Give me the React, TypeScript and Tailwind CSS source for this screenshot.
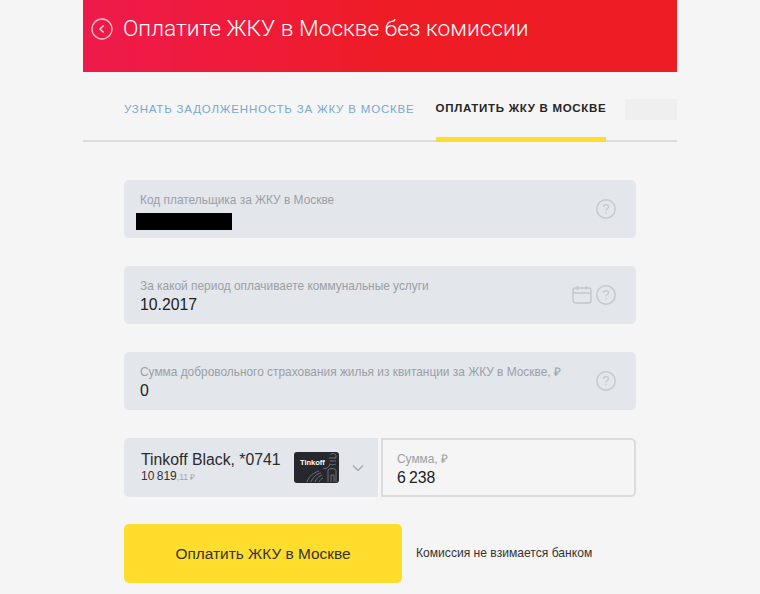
function Help() {
  return (
    <svg width="20" height="20" viewBox="0 0 20 20" fill="none" className="shrink-0">
      <circle cx="10" cy="10" r="9.2" stroke="#c4c8cc" strokeWidth="1.4" />
      <path d="M7.6 8c0-1.5 1.1-2.4 2.5-2.4s2.4.9 2.4 2.1c0 1.9-2.4 1.9-2.4 3.9" stroke="#c4c8cc" strokeWidth="1.3" fill="none" />
      <circle cx="10.1" cy="14" r="0.8" fill="#c4c8cc" />
    </svg>
  );
}

function Calendar() {
  return (
    <svg width="20" height="20" viewBox="0 0 20 20" fill="none" className="shrink-0">
      <rect x="1" y="3" width="18" height="15" rx="2.5" stroke="#c4c8cc" strokeWidth="1.4" />
      <path d="M1 8h18M5.5 1v4M14.5 1v4" stroke="#c4c8cc" strokeWidth="1.4" />
    </svg>
  );
}

function Field({ label, value, calendar }: { label: string; value?: string; calendar?: boolean }) {
  return (
    <div className="flex h-[58px] items-center justify-between rounded-[5px] bg-[#e3e6eb] pl-4 pr-5">
      {value !== undefined ? (
        <div className="flex flex-col pt-[3px]">
          <span className="text-[11.9px] leading-[16px] whitespace-nowrap text-[#9a9fa6]">{label}</span>
          <span className="mt-[1px] text-[15.8px] leading-[20px] text-[#222]">{value}</span>
        </div>
      ) : (
        <div className="flex flex-col pt-[2px]">
          <span className="text-[11.9px] leading-[16px] whitespace-nowrap text-[#9a9fa6]">{label}</span>
          <span className="mt-[5px] -mb-[2px] -ml-1 h-[17px] w-[96px] bg-black" />
        </div>
      )}
      <div className="flex items-center gap-[4px]">
        {calendar && <Calendar />}
        <Help />
      </div>
    </div>
  );
}

function TinkoffCard() {
  return (
    <div className="relative h-[31px] w-[45px] overflow-hidden rounded-[3px] bg-[#26282d]">
      <span className="absolute left-[6px] top-[6px] text-[7.5px] font-bold leading-[9px] text-white">Tinkoff</span>
      <svg width="45" height="31" viewBox="0 0 45 31" fill="none" className="absolute left-0 top-0">
        <path
          d="M13 30c2-6 6-9 12-11M17 30c2-5 5-8 10-9M21 30c1-3 4-6 7-7M25 30c1-2 2-3 4-4M36 3c2-2 4-2 6 0v3M35 6h7M36 9h6M35 12c2 1 5 1 7 0M33 16l3-3M34 30V18c2-2 6-2 8 0v12M37 30v-7h3v7M29 16c1 1 3 1 4 0"
          stroke="#9a9da1"
          strokeWidth="0.6"
        />
      </svg>
    </div>
  );
}

export default function App() {
  return (
    <div className="min-h-[594px] bg-[#f5f5f5] font-['Liberation_Sans',sans-serif]">
      <div className="mx-auto h-[594px] w-[594px] overflow-hidden">
        <header className="flex h-[72px] items-center gap-[10px] bg-gradient-to-r from-[#ee1a4b] via-[#ee1c25] to-[#ee1c25] pb-[14px] pl-[8px]">
          <svg width="22" height="22" viewBox="0 0 22 22" fill="none" className="shrink-0">
            <circle cx="11" cy="11" r="10" stroke="#f6c3cb" strokeWidth="1.3" />
            <path d="M12.6 7.5 9 11l3.6 3.5" stroke="#fbe0e4" strokeWidth="1.3" />
          </svg>
          <h1 className="font-['Roboto',sans-serif] text-[22.7px] font-light leading-[30px] whitespace-nowrap text-white">
            Оплатите ЖКУ в Москве без комиссии
          </h1>
        </header>

        <nav className="flex h-[70px] items-stretch border-b-2 border-[#dcdcdc] pl-[41px]">
          <div className="flex h-[70px] w-[312px] items-center pt-[6px] text-[11.5px] tracking-[0.82px] whitespace-nowrap text-[#79a9cc]">
            УЗНАТЬ ЗАДОЛЖЕННОСТЬ ЗА ЖКУ В МОСКВЕ
          </div>
          <div className="flex h-[70px] w-[170px] items-center justify-center border-b-[5px] border-[#ffdd2d] pt-[9px] text-[11.5px] font-bold tracking-[0.7px] whitespace-nowrap text-[#262626]">
            ОПЛАТИТЬ ЖКУ В МОСКВЕ
          </div>
          <div className="mt-[27px] ml-[19px] h-[21px] flex-1 bg-[#f0efef]" />
        </nav>

        <main className="ml-[41px] flex w-[512px] flex-col gap-[28px] pt-[38px]">
          <Field label="Код плательщика за ЖКУ в Москве" />
          <Field label="За какой период оплачиваете коммунальные услуги" value="10.2017" calendar />
          <Field label="Сумма добровольного страхования жилья из квитанции за ЖКУ в Москве, ₽" value="0" />

          <div className="flex h-[59px] gap-[3px]">
            <div className="flex w-[254px] items-center rounded-l-[5px] bg-[#e3e6eb] pl-[17px]">
              <div className="flex w-[153px] flex-col">
                <span className="text-[15.8px] leading-[18px] whitespace-nowrap text-[#2b2b2b]">Tinkoff Black, *0741</span>
                <span className="text-[12px] leading-[14px] text-[#333]">
                  10&#8201;819<span className="text-[8.5px] text-[#a0a4a9]">,11 ₽</span>
                </span>
              </div>
              <TinkoffCard />
              <svg width="12" height="8" viewBox="0 0 12 8" fill="none" className="ml-[13px]">
                <path d="M1 1.5 6 6.5l5-5" stroke="#9ea2a7" strokeWidth="1.1" />
              </svg>
            </div>
            <div className="flex flex-1 flex-col justify-center rounded-r-[5px] border-2 border-[#dcdcdc] pt-[3px] pl-[14px]">
              <span className="text-[11.9px] leading-[16px] text-[#9a9fa6]">Сумма, ₽</span>
              <span className="mt-[1px] text-[15.8px] leading-[20px] text-[#222]">6&#8201;238</span>
            </div>
          </div>

          <div className="-mt-[1px] flex items-center gap-[14px]">
            <button className="h-[59px] w-[278px] rounded-[5px] bg-[#ffdd2d] text-[15.4px] text-[#333]">
              Оплатить ЖКУ в Москве
            </button>
            <span className="text-[12.1px] whitespace-nowrap text-[#333]">Комиссия не взимается банком</span>
          </div>
        </main>
      </div>
    </div>
  );
}
